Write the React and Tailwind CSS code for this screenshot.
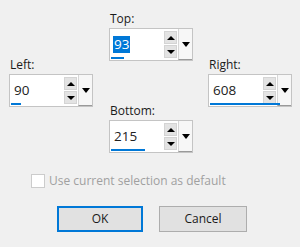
import React from "react";

function SpinField({ label, value, bar, selected }) {
  return (
    <div className="flex flex-col">
      <div className="h-4 text-[12px] leading-4 text-[#1a1a1a] pl-px">{label}</div>
      <div className="mt-px flex h-[33px] w-[84px] border border-[#c4c4c4] bg-white">
        {/* text area */}
        <div className="relative flex flex-1 items-center pl-[3px]">
          {selected ? (
            <span className="bg-[#0078d7] px-px text-[13.5px] leading-[17px] text-white">{value}</span>
          ) : (
            <span className="px-px text-[13.5px] leading-[17px] text-[#222]">{value}</span>
          )}
          <div
            className="absolute bottom-px left-[1px] h-[2px] bg-[#0078d7]"
            style={{ width: bar }}
          />
        </div>
        {/* spinner */}
        <div className="flex w-[13px] flex-col justify-center gap-px py-[2px]">
          <div className="flex flex-1 items-center justify-center border border-[#d4d4d4] bg-[#e3e3e3]">
            <div className="h-0 w-0 border-x-[4px] border-b-[4px] border-x-transparent border-b-black" />
          </div>
          <div className="flex flex-1 items-center justify-center border border-[#d4d4d4] bg-[#e3e3e3]">
            <div className="h-0 w-0 border-x-[4px] border-t-[4px] border-x-transparent border-t-black" />
          </div>
        </div>
        {/* dropdown */}
        <div className="ml-px flex w-[14px] items-center justify-center border-l border-[#d6d6d6] border-b border-b-[#9a9a9a] bg-[#f7f7f7]">
          <div className="h-0 w-0 border-x-[4px] border-t-[5px] border-x-transparent border-t-black" />
        </div>
      </div>
    </div>
  );
}

export default function App() {
  return (
    <div
      className="h-[247px] w-[300px] overflow-hidden bg-[#f0f0f0]"
      style={{ fontFamily: '"Open Sans", "Noto Sans", sans-serif' }}
    >
      <div className="flex pl-[9px]">
        <div className="pt-[57px]">
          <SpinField label="Left:" value="90" bar={10} />
        </div>
        <div className="ml-[16px] flex flex-col gap-[42px] pt-[11px]">
          <SpinField label="Top:" value="93" bar={13} selected />
          <SpinField label="Bottom:" value="215" bar={34} />
        </div>
        <div className="ml-[15px] pt-[57px]">
          <SpinField label="Right:" value="608" bar={70} />
        </div>
      </div>

      <div className="mt-[20px] flex items-center pl-[31px]">
        <div className="h-[14px] w-[14px] border border-[#cccccc] bg-white" />
        <span className="ml-[4px] text-[12px] leading-4 text-[#a0a0a0]">
          Use current selection as default
        </span>
      </div>

      <div className="mt-[17px] flex pl-[57px]">
        <button className="h-[26px] w-[86px] border-2 border-[#0078d7] bg-[#e1e1e1] text-[12px] text-[#1a1a1a]">
          OK
        </button>
        <button className="ml-[16px] h-[26px] w-[88px] border border-[#adadad] bg-[#e1e1e1] text-[12px] text-[#1a1a1a]">
          Cancel
        </button>
      </div>
    </div>
  );
}
